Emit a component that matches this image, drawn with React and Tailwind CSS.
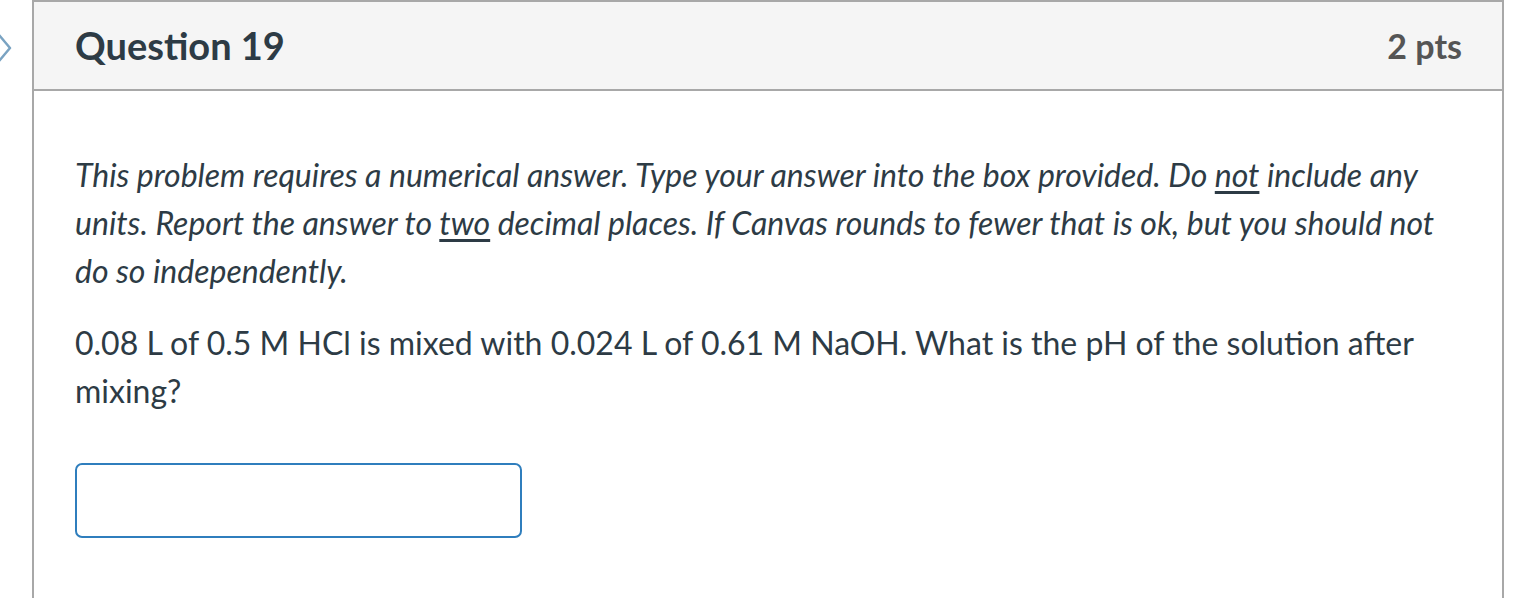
export default function App() {
  return (
    <div className="relative h-[598px] w-[1538px] overflow-hidden bg-white font-['Lato',sans-serif] text-[#2d3b45]">
      {/* collapse arrow */}
      <svg className="absolute left-[-9px] top-[32px]" width="24" height="32" viewBox="0 0 24 32" fill="none">
        <path d="M8 3 L19 16 L8 29" stroke="#7aa3c2" strokeWidth="2.5" strokeLinejoin="round" strokeLinecap="round" />
      </svg>

      <div className="ml-[32px] w-[1472px] border-2 border-[#a8a8a8] border-b-0 h-[620px] flex flex-col">
        {/* Header */}
        <div className="flex h-[89px] items-center justify-between border-b-2 border-[#a8a8a8] bg-[#f5f5f5] pl-[41px] pr-[40px]">
          <h2 className="text-[38px] font-bold">Question 19</h2>
          <span className="text-[34px] font-bold text-[#555]">2 pts</span>
        </div>

        {/* Body */}
        <div className="pl-[41px] pt-[60px]">
          <p className="text-[32px] italic leading-[48px] w-[1386px]">
            This problem requires a numerical answer. Type your answer into the box provided. Do <u className="underline-offset-4">not</u> include any units. Report the answer to <u className="underline-offset-4">two</u> decimal places. If Canvas rounds to fewer that is ok, but you should not do so independently.
          </p>
          <p className="mt-[24px] text-[32px] leading-[48px] w-[1386px]">
            0.08 L of 0.5 M HCl is mixed with 0.024 L of 0.61 M NaOH. What is the pH of the solution after mixing?
          </p>
          <input
            type="text"
            className="mt-[48px] block h-[75px] w-[447px] rounded-[7px] border-2 border-[#2f7ebd] bg-white outline-none"
          />
        </div>
      </div>
    </div>
  )
}
